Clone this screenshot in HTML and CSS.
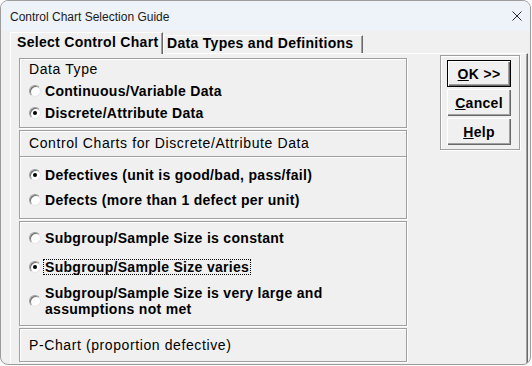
FILE: index.html
```html
<!DOCTYPE html>
<html>
<head>
<meta charset="utf-8">
<link rel="stylesheet" href="styles.css">
</head>
<body>
<div class="window">
  <div class="titlebar">
    <span class="title">Control Chart Selection Guide</span>
    <svg class="close" viewBox="0 0 10 10"><path d="M0.5 0.5 L9.5 9.5 M9.5 0.5 L0.5 9.5" stroke="#2b2b2b" stroke-width="1" fill="none"/></svg>
  </div>
  <div class="client">
    <div class="tabs">
      <div class="tab tab-active">Select Control Chart</div>
      <div class="tab tab-other">Data Types and Definitions</div>
    </div>
    <div class="panel">
      <div class="left">
        <div class="box box-a">
          <div class="heading">Data Type</div>
          <div class="opt opt-a"><span class="radio"></span><span class="lbl">Continuous/Variable Data</span></div>
          <div class="opt opt-a"><span class="radio on"></span><span class="lbl">Discrete/Attribute Data</span></div>
        </div>
        <div class="box box-b">
          <div class="box-head heading">Control Charts for Discrete/Attribute Data</div>
          <div class="opts-b">
            <div class="opt"><span class="radio on"></span><span class="lbl">Defectives (unit is good/bad, pass/fail)</span></div>
            <div class="opt"><span class="radio"></span><span class="lbl">Defects (more than 1 defect per unit)</span></div>
          </div>
        </div>
        <div class="box box-c">
          <div class="opt"><span class="radio"></span><span class="lbl">Subgroup/Sample Size is constant</span></div>
          <div class="opt opt-focus"><span class="radio on"></span><span class="lbl focus">Subgroup/Sample Size varies</span></div>
          <div class="opt opt-multi"><span class="radio"></span><span class="lbl multi">Subgroup/Sample Size is very large and<br>assumptions not met</span></div>
        </div>
        <div class="box box-d">
          <div class="heading">P-Chart (proportion defective)</div>
        </div>
      </div>
      <div class="frame">
        <button class="btn btn-default"><u>O</u>K &gt;&gt;</button>
        <button class="btn"><u>C</u>ancel</button>
        <button class="btn"><u>H</u>elp</button>
      </div>
    </div>
  </div>
</div>
</body>
</html>
```

FILE: styles.css
```css
* { box-sizing: border-box; }

body {
  margin: 0;
  width: 532px;
  height: 366px;
  overflow: hidden;
  background: #fbfbfb;
  font-family: "Liberation Sans", Arial, sans-serif;
  color: #000;
}

.window {
  width: 531px;
  height: 365px;
  border: 1px solid #9c9c9c;
  border-radius: 8px;
  overflow: hidden;
  background: #f0f0f0;
  display: flex;
  flex-direction: column;
}

.titlebar {
  height: 30px;
  flex: none;
  background: #eef3f9;
  display: flex;
  align-items: center;
  padding-left: 9px;
  font-size: 12px;
  line-height: 14px;
  color: #1a1a1a;
}

.title { margin-top: 1px; }

.close {
  margin-left: auto;
  margin-right: 8px;
  width: 10px;
  height: 10px;
}

.client {
  flex: 1;
  min-height: 0;
  padding: 1px 0 0 9px;
  display: flex;
  flex-direction: column;
}

.tabs {
  display: flex;
  align-items: flex-end;
  height: 21px;
  flex: none;
  position: relative;
  z-index: 1;
}

.tab {
  font-size: 14px;
  font-weight: bold;
  letter-spacing: 0.3px;
  line-height: 14px;
  white-space: nowrap;
  background: #f0f0f0;
  border-top: 1px solid #fff;
  border-left: 1px solid #fff;
  border-right: 1px solid #696969;
  box-shadow: inset -1px 0 0 #a0a0a0;
}

.tab-active {
  width: 153px;
  height: 22px;
  margin-bottom: -1px;
  padding: 2px 0 0 6px;
}

.tab-other {
  width: 200px;
  height: 18px;
  padding: 0 0 0 3px;
}

.panel {
  flex: 1;
  margin-right: 2px;
  border-top: 1px solid #fff;
  border-left: 1px solid #fff;
  border-right: 1px solid #696969;
  box-shadow: inset -1px 0 0 #a0a0a0;
  display: flex;
  align-items: flex-start;
  padding: 0 0 0 8px;
}

.left {
  width: 388px;
  margin-top: 4px;
  display: flex;
  flex-direction: column;
  gap: 2px;
}

.box {
  flex: none;
  border: 1px solid #a0a0a0;
  box-shadow: 1px 1px 0 #fff, inset 1px 1px 0 #fff;
}

.heading {
  font-size: 14px;
  line-height: 16px;
  letter-spacing: 0.6px;
  padding-left: 9px;
  white-space: nowrap;
}

.opt {
  display: flex;
  align-items: center;
  padding-left: 9px;
}

.radio {
  flex: none;
  position: relative;
  width: 12px;
  height: 12px;
  margin-right: 2px;
  border-radius: 50%;
  background: #fff;
  border: 1px solid;
  border-color: #9a9a9a #e6e6e6 #e6e6e6 #9a9a9a;
  box-shadow: inset 1px 1px 0 #6e6e6e;
}

.radio.on::after {
  content: "";
  position: absolute;
  left: 3px;
  top: 3px;
  width: 4px;
  height: 4px;
  border-radius: 50%;
  background: #000;
}

.lbl {
  font-size: 14px;
  font-weight: bold;
  letter-spacing: 0.3px;
  line-height: 14px;
  padding: 0 1px;
  border: 1px dotted transparent;
  white-space: nowrap;
}

.lbl.focus { border-color: #000; }

.lbl.multi { line-height: 16px; }

/* Box A */
.box-a {
  height: 70px;
  padding-top: 2px;
}
.box-a .heading { margin-bottom: 3px; }
.opt-a { height: 22px; }

/* Box B */
.box-b { height: 89px; }
.box-head {
  padding-top: 4px;
  height: 26px;
  border-bottom: 1px solid #a0a0a0;
  box-shadow: 0 1px 0 #fff;
}
.opts-b {
  padding-top: 10px;
  display: flex;
  flex-direction: column;
  gap: 9px;
}

/* Box C */
.box-c {
  height: 105px;
  padding-top: 8px;
  display: flex;
  flex-direction: column;
}
.opt-focus { margin-top: 13px; }
.opt-multi { margin-top: 9px; }

/* Box D */
.box-d {
  height: 34px;
  padding-top: 8px;
}

/* Buttons */
.frame {
  flex: none;
  width: 80px;
  height: 95px;
  margin-left: 33px;
  margin-top: 1px;
  border: 1px solid #a0a0a0;
  box-shadow: 1px 1px 0 #fff, inset 1px 1px 0 #fff;
  padding: 4px 0 0 6px;
  display: flex;
  flex-direction: column;
  gap: 2px;
}

.btn {
  width: 64px;
  height: 27px;
  margin: 0;
  padding: 0;
  background: #f0f0f0;
  border: none;
  font-family: "Liberation Sans", Arial, sans-serif;
  font-size: 14px;
  font-weight: bold;
  letter-spacing: 0.3px;
  line-height: 16px;
  color: #000;
  box-shadow: inset 1px 1px 0 #fff, inset -1px -1px 0 #696969, inset -2px -2px 0 #a0a0a0;
}

.btn-default {
  border: 1px solid #000;
}
```
